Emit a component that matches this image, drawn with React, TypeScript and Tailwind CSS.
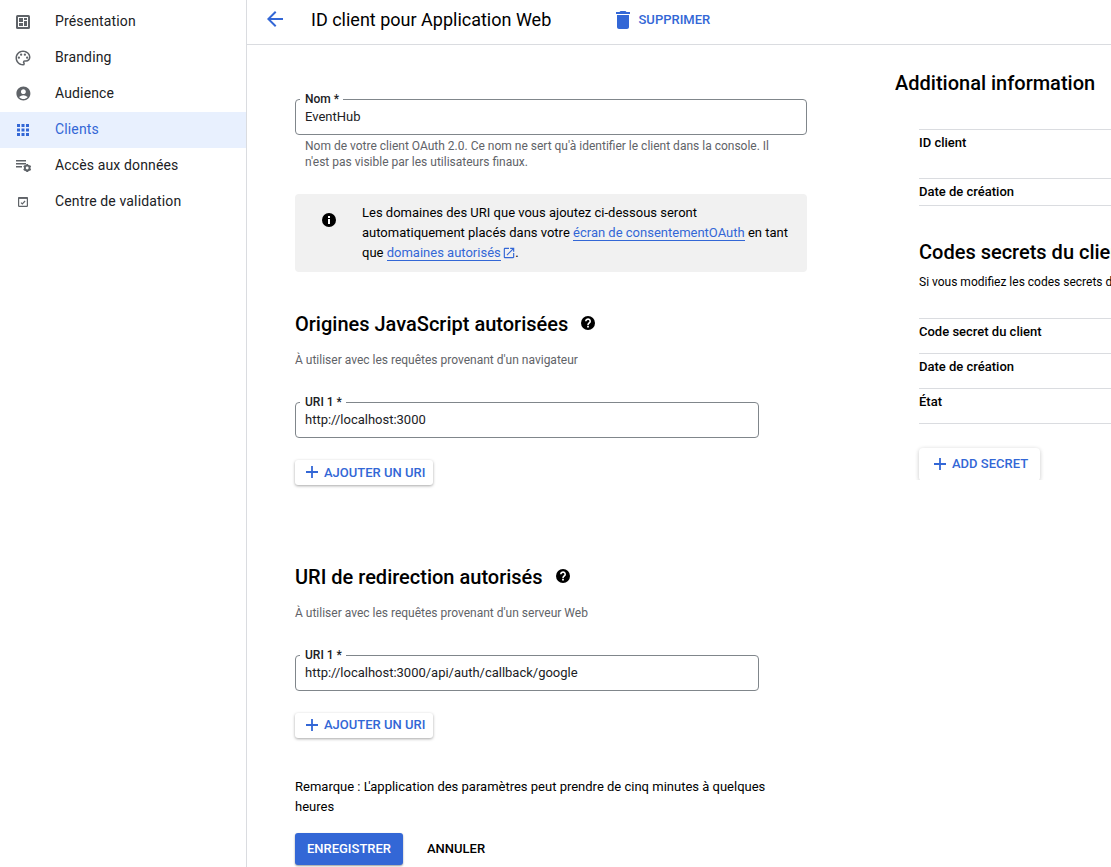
import type { ReactNode } from "react";
import {
  MdAccountCircle,
  MdApps,
  MdArrowBack,
  MdDelete,
  MdLaunch,
  MdOutlinePalette,
} from "react-icons/md";

function OverviewIcon() {
  return (
    <svg width="14" height="14" viewBox="0 0 14 14" shapeRendering="crispEdges">
      <rect width="14" height="14" rx="1.5" fill="#5f6368" shapeRendering="auto" />
      <rect x="2" y="2" width="10" height="10" fill="#fff" />
      <path d="M3 3h4v4H3zM8 3h3v2H8zM3 8h4v3H3zM8 6h3v5H8z" fill="#5f6368" />
    </svg>
  );
}

function DataAccessIcon() {
  return (
    <svg className="ml-0.5 shrink-0" width="16" height="14" viewBox="0 0 16 14" fill="none" stroke="#5f6368">
      <path d="M0 1.75h10M0 4.75h10M0 7.75h6" strokeWidth="1.5" />
      <circle cx="11.2" cy="9" r="2.4" strokeWidth="1.9" />
      <path
        d="M11.2 5v1.4M11.2 11.6v1.4M7.7 7l1.3.7M13.4 10.3l1.3.7M7.7 11l1.3-.7M13.4 7.7l1.3-.7"
        strokeWidth="1.9"
      />
    </svg>
  );
}

function ValidationIcon() {
  return (
    <svg width="10" height="10" viewBox="0 0 10 10" fill="none" stroke="#5f6368">
      <rect x="0.6" y="0.6" width="8.8" height="8.8" rx="0.6" strokeWidth="1.2" />
      <path d="M0.5 1h9" strokeWidth="1.8" />
      <path d="M3 5.6l1.3 1.3L7.1 4" strokeWidth="1.1" />
    </svg>
  );
}

function InfoIcon() {
  return (
    <svg className="mt-[10px] ml-[27px] shrink-0" width="14" height="14" viewBox="0 0 14 14">
      <circle cx="7" cy="7" r="7" />
      <path d="M6 3h2v2H6zM6 6h2v5H6z" fill="#fff" />
    </svg>
  );
}

function HelpIcon() {
  return (
    <svg className="mb-0.5 ml-[13px]" width="14" height="14" viewBox="0 0 14 14">
      <circle cx="7" cy="7" r="7" />
      <path
        d="M4.8 5.3A2.2 2.1 0 1 1 8.3 6.9C7.5 7.5 7 7.8 7 8.9"
        fill="none"
        stroke="#fff"
        strokeWidth="1.6"
      />
      <path d="M6.1 9.8h1.8v1.7H6.1z" fill="#fff" />
    </svg>
  );
}

function PlusIcon() {
  return (
    <svg width="12" height="12" viewBox="0 0 12 12" stroke="#3367d6" strokeWidth="1.8">
      <path d="M6 0v12M0 6h12" />
    </svg>
  );
}

function NavItem({ icon, label, active = false }: { icon: ReactNode; label: string; active?: boolean }) {
  return (
    <a
      className={
        active
          ? "flex h-9 items-center bg-[#e8f0fe] text-[#3367d6]"
          : "flex h-9 items-center text-[#202124]"
      }
    >
      <span className="ml-3.5 flex w-[18px] justify-center text-lg">{icon}</span>
      <span className="ml-[23px] pb-0.5 text-sm tracking-[0.14px]">{label}</span>
    </a>
  );
}

function Field({ label, value, notch }: { label: string; value: string; notch: string }) {
  return (
    <div className="relative flex h-9 items-center rounded-[4px] border border-[#80868b] px-[9px] text-[13px] tracking-[-0.01px] text-[#202124]">
      <span
        className={`absolute -top-2 left-1 h-3.5 bg-white pl-[5px] text-xs leading-3.5 font-medium tracking-normal whitespace-nowrap ${notch}`}
      >
        {label}
      </span>
      {value}
    </div>
  );
}

function AddButton() {
  return (
    <button className="flex h-[25px] w-[138px] items-center rounded-[3px] bg-white pl-[11px] text-[13px] font-medium whitespace-nowrap text-[#3367d6] shadow-[0_1px_3px_rgba(0,0,0,0.35)]">
      <span className="mb-px">
        <PlusIcon />
      </span>
      <span className="ml-1.5">AJOUTER UN URI</span>
    </button>
  );
}

function UriSection({ title, hint, value, gap }: { title: string; hint: string; value: string; gap: string }) {
  return (
    <section className="h-[253px]">
      <h2 className="flex h-7 items-center text-xl font-medium">
        {title}
        <HelpIcon />
      </h2>
      <p className="mt-[14px] text-xs leading-4 text-[#5f6368]">{hint}</p>
      <div className="mt-[34px] w-[464px]">
        <Field label="URI 1 *" value={value} notch="w-[46px]" />
      </div>
      <div className={gap}>
        <AddButton />
      </div>
    </section>
  );
}

function InfoRow({ label, size }: { label: string; size: string }) {
  return (
    <div className={`border-t border-[#dadce0] pt-[5px] text-[13px] leading-4 font-medium ${size}`}>
      {label}
    </div>
  );
}

export default function App() {
  return (
    <div className="flex h-[867px] w-[1111px] overflow-hidden bg-white font-['Roboto',sans-serif] text-black">
      <nav className="w-[247px] shrink-0 border-r border-[#dadce0] pt-1">
        <NavItem icon={<OverviewIcon />} label="Présentation" />
        <NavItem icon={<MdOutlinePalette className="text-[#5f6368]" />} label="Branding" />
        <NavItem
          icon={<MdAccountCircle className="mb-px text-[16.8px] text-[#5f6368]" />}
          label="Audience"
        />
        <NavItem icon={<MdApps />} label="Clients" active />
        <NavItem icon={<DataAccessIcon />} label="Accès aux données" />
        <NavItem icon={<ValidationIcon />} label="Centre de validation" />
      </nav>

      <div className="flex min-w-0 flex-1 flex-col">
        <header className="flex h-[45px] shrink-0 items-center border-b border-[#dadce0] pb-1 pl-4">
          <MdArrowBack className="mb-0.5 text-2xl text-[#3367d6]" />
          <h1 className="ml-6 w-[300px] text-lg">ID client pour Application Web</h1>
          <button className="flex items-center gap-[3.5px] text-[13px] font-medium text-[#3367d6]">
            <MdDelete className="text-2xl" />
            SUPPRIMER
          </button>
        </header>

        <div className="flex min-h-0 flex-1 pl-12">
          <main className="w-[512px] shrink-0 pt-[54px]">
            <Field label="Nom *" value="EventHub" notch="w-[43px]" />
            <p className="mt-[3px] pl-2.5 text-xs leading-4 text-[#5f6368]">
              Nom de votre client OAuth 2.0. Ce nom ne sert qu'à identifier le client dans la console. Il
              <br />
              n'est pas visible par les utilisateurs finaux.
            </p>

            <div className="mt-6 flex h-[78px] rounded-[4px] bg-[#f1f1f1] pt-[9px]">
              <InfoIcon />
              <p className="ml-[26px] text-[13px] leading-5 whitespace-nowrap">
                Les domaines des URI que vous ajoutez ci-dessous seront
                <br />
                automatiquement placés dans votre{" "}
                <a className="border-b border-[#3367d6] text-[#3367d6]">écran de consentementOAuth</a> en tant
                <br />
                que <a className="border-b border-[#3367d6] text-[#3367d6]">domaines autorisés</a>
                <MdLaunch className="-mr-px mb-px ml-[1.5px] inline text-sm text-[#3367d6]" />.
              </p>
            </div>

            <div className="mt-[38px]">
              <UriSection
                title="Origines JavaScript autorisées"
                hint="À utiliser avec les requêtes provenant d'un navigateur"
                value="http://localhost:3000"
                gap="mt-[22px]"
              />
              <UriSection
                title="URI de redirection autorisés"
                hint="À utiliser avec les requêtes provenant d'un serveur Web"
                value="http://localhost:3000/api/auth/callback/google"
                gap="mt-[21.5px]"
              />
            </div>

            <p className="-mt-[39px] text-[13px] leading-5">
              Remarque : <span className="tracking-[-2.4px]">L</span>'application des paramètres peut prendre de
              cinq minutes à quelques
              <br />
              heures
            </p>
            <div className="mt-4 flex h-8 text-[13px] font-medium">
              <button className="w-[108px] rounded-[3px] bg-[#3367d6] text-white shadow-[0_1px_2px_rgba(0,0,0,0.4)]">
                ENREGISTRER
              </button>
              <button className="ml-6">ANNULER</button>
            </div>
          </main>

          <aside className="ml-[88px] min-w-0 flex-1 overflow-hidden pt-6 whitespace-nowrap">
            <h2 className="text-xl leading-7 font-medium">Additional information</h2>
            <div className="mt-8 pl-6">
              <div className="border-b border-[#dadce0]">
                <InfoRow label="ID client" size="h-[49px]" />
                <InfoRow label="Date de création" size="h-[27px]" />
              </div>
              <h2 className="mt-8 text-xl leading-7 font-medium">Codes secrets du client</h2>
              <p className="mt-2 text-xs leading-4">Si vous modifiez les codes secrets du client</p>
              <div className="mt-7 border-b border-[#dadce0]">
                <InfoRow label="Code secret du client" size="h-[35px]" />
                <InfoRow label="Date de création" size="h-[35px]" />
                <InfoRow label="État" size="h-[35px]" />
              </div>
              <div className="mt-5 -ml-1 h-9 overflow-hidden pt-1 pl-1">
                <button className="flex h-[33px] w-[121px] items-center rounded-[4px] pb-px pl-[15px] text-[13px] font-medium text-[#3367d6] shadow-[0_1px_4px_rgba(0,0,0,0.22)]">
                  <PlusIcon />
                  <span className="ml-1.5">ADD SECRET</span>
                </button>
              </div>
            </div>
          </aside>
        </div>
      </div>
    </div>
  );
}
